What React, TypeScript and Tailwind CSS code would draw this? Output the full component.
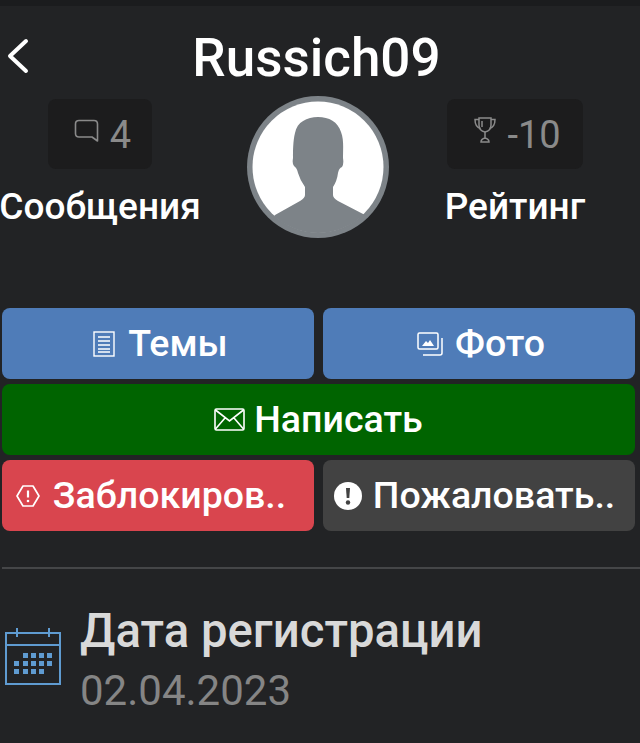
const font = { fontFamily: "Roboto, sans-serif" };

function Avatar() {
  return (
    <svg width="142" height="142" viewBox="0 0 142 142" className="shrink-0">
      <defs>
        <clipPath id="avatarClip">
          <circle cx="71" cy="71" r="66" />
        </clipPath>
      </defs>
      <circle cx="71" cy="71" r="71" fill="#7d8388" />
      <circle cx="71" cy="71" r="65.500" fill="#ffffff" />
      <path
        clipPath="url(#avatarClip)"
        d="M71 21 C60 21 50 26 48 37 C46 45 46 55 46 62 Q45 68 47 70 Q50 72 51 77 Q53 84 58 91 L58 99 Q58 102 53 105 L28 119 L10 142 L132 142 L118 119 L91 105 Q86 102 86 99 L86 91 Q90 85 91 77 Q92 72 95 71 Q97 68 96 62 C96 52 97 44 94 36 C91 26 82 21 71 21 Z"
        fill="#7d8388"
      />
    </svg>
  );
}

function Stat({ label, boxWidth, children }: { label: string; boxWidth: string; children: React.ReactNode }) {
  return (
    <div className="mt-[3px] flex flex-col items-center">
      <div className={`${boxWidth} flex h-[70px] items-center justify-center gap-[11px] rounded-lg bg-[#1c1c1d] pl-[5px] pt-[2px] text-[38px] text-[#8a8a8a]`}>
        {children}
      </div>
      <div className="mt-[14px] text-[37px] font-medium leading-[48px] text-white">{label}</div>
    </div>
  );
}

function ActionButton({ color, spacing, children }: { color: string; spacing: string; children: React.ReactNode }) {
  return (
    <button className={`${color} ${spacing} flex h-[71px] items-center justify-center rounded-lg text-[37.5px] font-medium text-white`}>
      {children}
    </button>
  );
}

export default function App() {
  return (
    <div style={font} className="h-[743px] w-[640px] overflow-hidden bg-[#222325]">
      <div className="h-[6px] bg-[#1b1c1e]" />

      <div className="grid h-[90px] grid-cols-[100px_1fr_107px] items-center">
        <svg width="24" height="36" viewBox="0 0 24 36" fill="none" stroke="white" strokeWidth="4" strokeLinecap="round" strokeLinejoin="round" className="ml-[6px] mt-[10px]">
          <path d="M20 3 L4 18 L20 33" />
        </svg>
        <h1 className="mt-[14px] text-center text-[53px] font-medium leading-none text-white">Russich09</h1>
      </div>

      <div className="flex items-start">
        <div className="w-[200px]">
          <Stat label="Сообщения" boxWidth="w-[104px]">
            <svg width="25" height="25" viewBox="0 0 25 25" fill="none" stroke="#8a8a8a" strokeWidth="1.600" className="mb-[8px]">
              <path d="M5 1.500 H20 Q23.500 1.500 23.500 5 V22 L18 18 H5 Q1.500 18 1.500 14.500 V5 Q1.500 1.500 5 1.500 Z" strokeLinejoin="round" />
            </svg>
            <span>4</span>
          </Stat>
        </div>
        <div className="ml-[47px] mr-[55px]">
          <Avatar />
        </div>
        <div className="w-[142px]">
          <Stat label="Рейтинг" boxWidth="w-[136px]">
            <svg width="22" height="26" viewBox="0 0 22 26" fill="none" stroke="#8a8a8a" strokeWidth="1.500" className="mb-[10px]">
              <path d="M5 1 H17 V8 Q17 14 11 15 Q5 14 5 8 Z" />
              <path d="M5 2.500 H1 Q1 10 6.500 11.500 M17 2.500 H21 Q21 10 15.500 11.500" />
              <path d="M8 4 V10 M11 15 V21 M7 25 Q7 22 11 21 Q15 22 15 25 Z" />
            </svg>
            <span>-10</span>
          </Stat>
        </div>
      </div>

      <div className="mt-[70px] grid grid-cols-2 gap-x-[9px] gap-y-[5px] pl-[2px] pr-[5px]">
        <ActionButton color="bg-[#4f7cb8]" spacing="gap-[13px] pl-[5px]">
          <svg width="22" height="26" viewBox="0 0 22 26" fill="none" stroke="white" strokeWidth="1.400">
            <rect x="1" y="1" width="20" height="24" />
            <path d="M5 6 H17 M5 10 H17 M5 14 H17 M5 18 H17 M5 21 H17" />
          </svg>
          <span>Темы</span>
        </ActionButton>
        <ActionButton color="bg-[#4f7cb8]" spacing="gap-[12px] pl-[4px]">
          <svg width="26" height="24" viewBox="0 0 26 24" fill="none" stroke="white" strokeWidth="1.500">
            <rect x="1" y="1" width="20" height="16" rx="1.500" />
            <path d="M5 14 L9 9 L11 11 L13 8 L17 14 Z" fill="white" stroke="none" />
            <path d="M25 6 V21 Q25 23 23 23 H6" />
          </svg>
          <span>Фото</span>
        </ActionButton>
        <div className="col-span-2 grid">
          <ActionButton color="bg-[#006400]" spacing="gap-[9px]">
            <svg width="31" height="23" viewBox="0 0 31 23" fill="none" stroke="white" strokeWidth="1.600">
              <rect x="1" y="1" width="29" height="21" rx="1.500" />
              <path d="M1.500 2 L15.500 13 L29.500 2 M1.500 21 L11 10 M29.500 21 L20 10" />
            </svg>
            <span>Написать</span>
          </ActionButton>
        </div>
        <ActionButton color="bg-[#d9454e]" spacing="gap-[13px] pr-[14px]">
          <svg width="24" height="22" viewBox="0 0 24 22" fill="none" stroke="white" strokeWidth="1.700">
            <path d="M7 1 H17 L23 11 L17 21 H7 L1 11 Z" strokeLinejoin="round" />
            <path d="M12 5.500 V12.500" strokeWidth="2.200" />
            <circle cx="12" cy="16" r="1.300" fill="white" stroke="none" />
          </svg>
          <span>Заблокиров..</span>
        </ActionButton>
        <ActionButton color="bg-[#424242]" spacing="gap-[11px] pr-[9px]">
          <svg width="28" height="28" viewBox="0 0 28 28">
            <circle cx="14" cy="14" r="14" fill="white" />
            <path d="M12 6 H16 L15.300 16 H12.700 Z" fill="#424242" />
            <circle cx="14" cy="20.500" r="2.200" fill="#424242" />
          </svg>
          <span>Пожаловать..</span>
        </ActionButton>
      </div>

      <div className="ml-[2px] mt-[36px] h-[2px] bg-[#454648]" />

      <div className="mt-[33px] flex items-start pl-[5px]">
        <svg width="56" height="58" viewBox="0 0 56 58" fill="none" stroke="#5f9bd1" strokeWidth="2" className="mt-[26px] shrink-0">
          <rect x="1" y="5" width="54" height="51" />
          <path d="M1 17 H55 M12 0 V9 M44 0 V9" />
          <g fill="#5f9bd1" stroke="none">
            <rect x="18" y="25" width="5" height="5" />
            <rect x="26" y="25" width="5" height="5" />
            <rect x="34" y="25" width="5" height="5" />
            <rect x="42" y="25" width="5" height="5" />
            <rect x="9" y="33" width="5" height="5" />
            <rect x="18" y="33" width="5" height="5" />
            <rect x="26" y="33" width="5" height="5" />
            <rect x="34" y="33" width="5" height="5" />
            <rect x="42" y="33" width="5" height="5" />
            <rect x="9" y="41" width="5" height="5" />
            <rect x="18" y="41" width="5" height="5" />
            <rect x="26" y="41" width="5" height="5" />
            <rect x="34" y="41" width="5" height="5" />
          </g>
        </svg>
        <div className="ml-[19px]">
          <div className="text-[47.300px] font-medium leading-[58px] text-[#d9d9d9]">Дата регистрации</div>
          <div className="mt-[1px] text-[42px] leading-[60px] text-[#858585]">02.04.2023</div>
        </div>
      </div>
    </div>
  );
}
